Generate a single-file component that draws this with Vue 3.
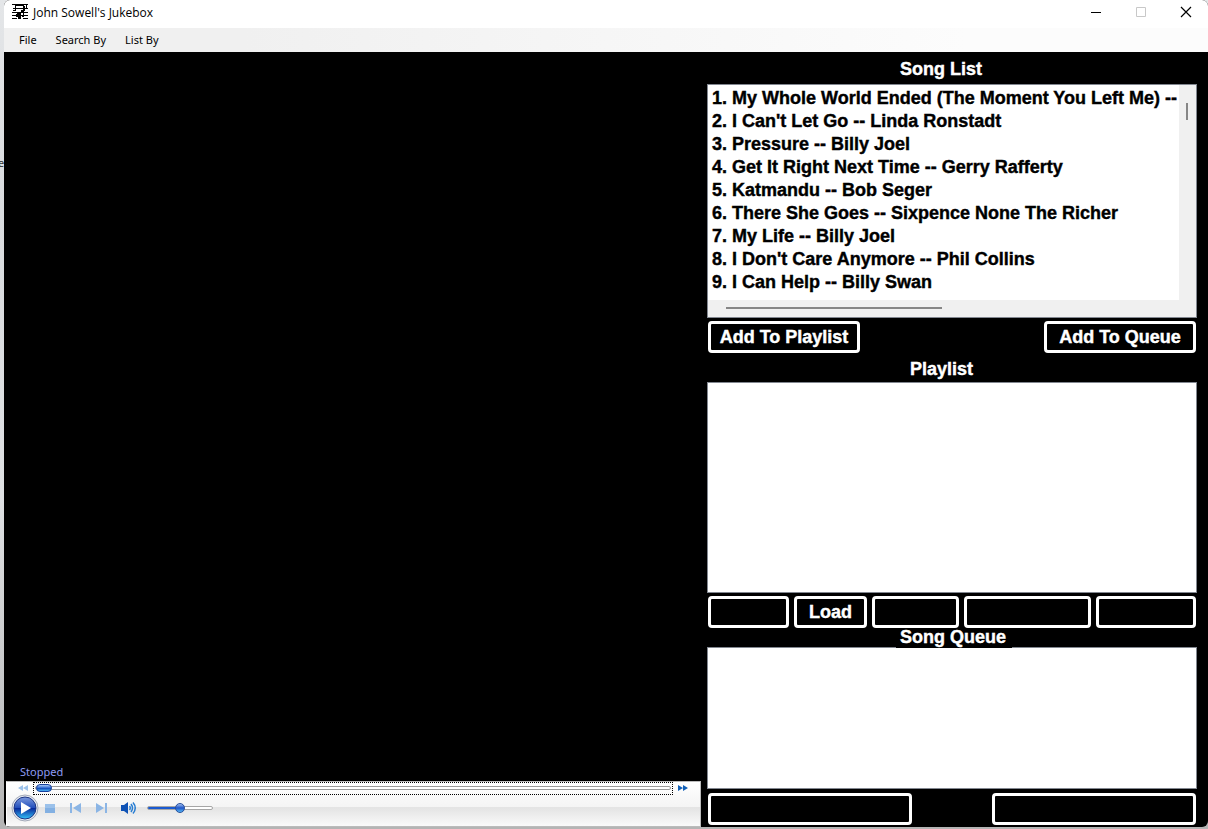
<script setup>
import { ref } from 'vue'

const songs = [
  "1. My Whole World Ended (The Moment You Left Me) --",
  "2. I Can't Let Go -- Linda Ronstadt",
  '3. Pressure -- Billy Joel',
  '4. Get It Right Next Time -- Gerry Rafferty',
  '5. Katmandu -- Bob Seger',
  '6. There She Goes -- Sixpence None The Richer',
  '7. My Life -- Billy Joel',
  "8. I Don't Care Anymore -- Phil Collins",
  '9. I Can Help -- Billy Swan'
]
const position = ref(0)
const volume = ref(50)
</script>

<template>
  <div class="desktop">
    <span class="behind" aria-hidden="true">e</span>
    <div class="window">
      <header class="titlebar">
        <svg class="logo" width="16" height="16" viewBox="0 0 16 16" fill="#000" shape-rendering="crispEdges">
          <path d="M0 0h16v1H0zM1 4h15v1H1zM0 8h16v1H0zM0 11h16v1H0zM0 14h5v1H0zM11 14h5v1h-5z" />
          <path d="M3 1h1v6H3zM4 1h8v1H4zM11 2h2v5h-2zM1 6h3v1H1zM9 6h3v2H9zM14 1h1v3h-1zM5 9h4v2H5zM4 10h2v3H4zM8 9h1v6H8zM6 12h3v3H6zM11 9h1v4h-1zM10 12h2v1h-2z" />
        </svg>
        <h1>John Sowell's Jukebox</h1>
        <div class="controls">
          <button aria-label="Minimize"><svg width="12" height="12" viewBox="0 0 12 12"><path d="M1 6.500h10" stroke="#000" /></svg></button>
          <button aria-label="Maximize" disabled><svg width="12" height="12" viewBox="0 0 12 12"><path d="M1.500 1.500h9v9h-9z" fill="none" stroke="#c8c8c8" /></svg></button>
          <button aria-label="Close"><svg width="12" height="12" viewBox="0 0 12 12"><path d="M1 1l10 10M11 1L1 11" stroke="#000" stroke-width="1.200" /></svg></button>
        </div>
      </header>
      <nav class="menu">
        <button>File</button>
        <button>Search By</button>
        <button>List By</button>
      </nav>
      <main>
        <section class="stage">
          <p class="status">Stopped</p>
          <div class="player">
            <div class="seek">
              <button class="skip" aria-label="Rewind"><svg width="10" height="6" viewBox="0 0 10 6"><path d="M5 0v6L0 3zM10 0v6L5 3z" fill="#9cc2ea" /></svg></button>
              <input v-model="position" class="track" type="range" min="0" max="100" aria-label="Seek">
              <button class="skip" aria-label="Fast forward"><svg width="10" height="6" viewBox="0 0 10 6"><path d="M0 0v6l5-3zM5 0v6l5-3z" fill="#1260b8" /></svg></button>
            </div>
            <div class="transport">
              <button class="play" aria-label="Play">
                <svg width="28" height="28" viewBox="0 0 28 28">
                  <defs>
                    <linearGradient id="orb" x2="0" y2="1"><stop offset="0" stop-color="#7d9ade" /><stop offset=".48" stop-color="#2450bd" /><stop offset=".52" stop-color="#082a9c" /><stop offset="1" stop-color="#35c4fa" /></linearGradient>
                  </defs>
                  <circle cx="14" cy="14" r="13" fill="#e8ebf2" stroke="#a3aab9" />
                  <circle cx="14" cy="14" r="11" fill="url(#orb)" stroke="#1c3583" />
                  <path d="M10 8v12l10-6z" fill="#fff" />
                </svg>
              </button>
              <button aria-label="Stop"><svg width="10" height="9" viewBox="0 0 10 9"><path d="M0 0h10v9H0z" fill="#83b0e2" /><path d="M0 0h10v4H0z" fill="#9bc1ea" /></svg></button>
              <button aria-label="Previous"><svg width="12" height="10" viewBox="0 0 12 10"><path d="M1 0h2v10H1zM12 0v10L4 5z" fill="#8bb5e5" /></svg></button>
              <button aria-label="Next"><svg width="12" height="10" viewBox="0 0 12 10"><path d="M10 0h2v10h-2zM1 0v10l8-5z" fill="#8bb5e5" /></svg></button>
              <button aria-label="Mute">
                <svg width="16" height="12" viewBox="0 0 16 12">
                  <path d="M0 3h3l4-3v12L3 9H0z" fill="#0e52b5" />
                  <path d="M8.500 4q1.500 2 0 4M10 2q3 4 0 8M12 .5q4.500 5.500 0 11" fill="none" stroke="#2b7fd3" stroke-width="1.500" />
                </svg>
              </button>
              <input v-model="volume" class="volume" type="range" min="0" max="100" aria-label="Volume">
            </div>
          </div>
        </section>

        <aside class="lists">
          <h2 class="first">Song List</h2>
          <div class="box songs">
            <ol>
              <li v-for="song in songs" :key="song">{{ song }}</li>
            </ol>
            <div class="vbar"><i></i></div>
            <div class="hbar"><i></i></div>
          </div>
          <div class="row ends">
            <button class="add">Add To Playlist</button>
            <button class="add">Add To Queue</button>
          </div>
          <h2 class="second">Playlist</h2>
          <div class="box playlist"></div>
          <div class="row five">
            <button disabled aria-label="Save"></button>
            <button>Load</button>
            <button disabled aria-label="Clear"></button>
            <button disabled aria-label="Remove"></button>
            <button disabled aria-label="Play playlist"></button>
          </div>
          <h2 class="third"><span>Song Queue</span></h2>
          <div class="box queue"></div>
          <div class="row ends last">
            <button class="wide" disabled aria-label="Clear queue"></button>
            <button class="wide" disabled aria-label="Remove from queue"></button>
          </div>
        </aside>
      </main>
    </div>
  </div>
</template>

<style>
body { margin: 0; }
</style>

<style scoped>
* { box-sizing: border-box; }
h1, h2, p, ol { margin: 0; padding: 0; }
button { padding: 0; border: 0; background: none; color: inherit; font: inherit; }
svg { display: block; }
.desktop {
  position: relative;
  display: flex;
  height: 100vh;
  min-height: 600px;
  padding: 0 0 2px 4px;
  overflow: hidden;
  background: linear-gradient(#e4e6e8, #d9dbde 25%, #dfe1e3 60%, #b4b4b4);
  font-family: "Noto Sans", "Open Sans", sans-serif;
}
.behind {
  position: absolute;
  top: 155px;
  left: -2px;
  color: #333;
  font-size: 11px;
  line-height: 16px;
}
.window {
  position: relative;
  display: flex;
  flex: 1;
  flex-direction: column;
  min-width: 0;
  overflow: hidden;
  border-radius: 6px;
  background: #000;
}
.titlebar {
  display: flex;
  align-items: center;
  height: 28px;
  padding-left: 8px;
  padding-bottom: 4px;
  background: #fff;
}
.titlebar h1 {
  flex: 1;
  padding: 2px 0 0 5px;
  font-family: "Open Sans", "Noto Sans", sans-serif;
  font-size: 12px;
  font-weight: 400;
  line-height: 16px;
}
.controls { display: flex; }
.controls button { display: grid; place-items: center; width: 45px; height: 24px; }
.menu {
  display: flex;
  gap: 19px;
  height: 24px;
  padding-left: 15px;
  background: linear-gradient(90deg, #f0f0f0 20%, #fcfcfc 80%);
  font-size: 11px;
  line-height: 24px;
}
main { display: flex; flex: 1; gap: 6px; min-height: 0; padding: 0 11px 0 2px; }
.stage { display: flex; flex: 695; flex-direction: column; justify-content: flex-end; min-width: 0; }
.status { padding: 0 14px 1px; color: #8e9cf4; font-size: 11px; line-height: 16px; }
.player {
  height: 46px;
  border: 1px solid #bbb;
  border-left-color: #fff;
  background: linear-gradient(#fff, #f4f4f4 57%, #e3e3e3 58%, #fafafa);
}
.seek { display: flex; align-items: center; height: 12px; padding: 0 12px 0 11px; gap: 5px; }
.skip { width: 10px; }
input[type="range"] { -webkit-appearance: none; appearance: none; min-width: 0; margin: 0; background: none; }
.track { flex: 1; height: 13px; padding: 0 1px; border: 1px dotted #000; outline: 0; }
.track::-webkit-slider-runnable-track { height: 4px; border: 1px solid #9a9a9a; border-radius: 2px; background: #fff; }
.track::-webkit-slider-thumb {
  -webkit-appearance: none;
  width: 16px;
  height: 8px;
  margin-top: -3px;
  border: 1px solid #16409b;
  border-radius: 4px;
  background: linear-gradient(#a7c8f5, #2a66d2 50%, #0e43b5 51%, #4cb4f5);
}
.transport { display: flex; align-items: center; gap: 14px; height: 28px; padding-left: 4px; }
.play { margin-right: -8px; }
.transport .volume { width: 66px; height: 12px; margin-left: -4px; }
.volume::-webkit-slider-runnable-track {
  height: 4px;
  border: 1px solid #a6a6a6;
  border-radius: 2px;
  background: linear-gradient(90deg, #1a5ad0 50%, #fff 50%);
}
.volume::-webkit-slider-thumb {
  -webkit-appearance: none;
  width: 10px;
  height: 10px;
  margin-top: -4px;
  border: 1px solid #274f9c;
  border-radius: 5px;
  background: linear-gradient(#9dbdf0, #1f55c8 50%, #57b8f4);
}
.lists {
  display: flex;
  flex: 490;
  flex-direction: column;
  min-width: 0;
  font-family: "Liberation Sans", Arial, sans-serif;
  -webkit-text-stroke: 0.4px;
}
.lists h2 { color: #fff; font-size: 18px; font-weight: 700; line-height: 18px; }
.lists .first { height: 32px; padding: 8px 0 0 193px; }
.lists .second { height: 29px; padding: 7px 0 0 203px; }
.lists .third { position: relative; z-index: 1; height: 19px; padding-left: 189px; }
.third span { display: inline-block; height: 20px; padding: 0 6px 0 4px; background: #000; }
.box { min-height: 0; border: 1px solid #828790; background: #fff; color: #000; }
.songs {
  display: grid;
  flex: 234 0 0;
  grid-template: minmax(0, 1fr) 17px / minmax(0, 1fr) 17px;
}
.playlist { flex: 211 0 0; }
.queue { flex: 141 0 0; }
.songs ol { overflow: hidden; padding: 2px 0 0 4px; list-style: none; }
.songs li { font-size: 18px; font-weight: 700; line-height: 23px; white-space: nowrap; }
.vbar { background: #f0f0f0; }
.vbar i { display: block; width: 2px; height: 17px; margin: 18px 0 0 7px; background: #868686; }
.hbar { grid-column: 1 / 3; padding: 7px 0 0 18px; background: #f0f0f0; }
.hbar i { display: block; width: 46%; height: 2px; background: #868686; }
.row { display: flex; flex: none; height: 32px; margin: 3px 1px 0; }
.row button {
  border: 3px solid #fff;
  border-radius: 4px;
  background: #000;
  color: #fff;
  font-size: 18px;
  font-weight: 700;
}
.ends { justify-content: space-between; }
.row .add { width: 152px; }
.row .wide { width: 204px; }
.five { display: grid; grid-template-columns: 81fr 73fr 87fr 127fr 100fr; gap: 5px; }
.last { margin: 4px 1px 2px; }
</style>
